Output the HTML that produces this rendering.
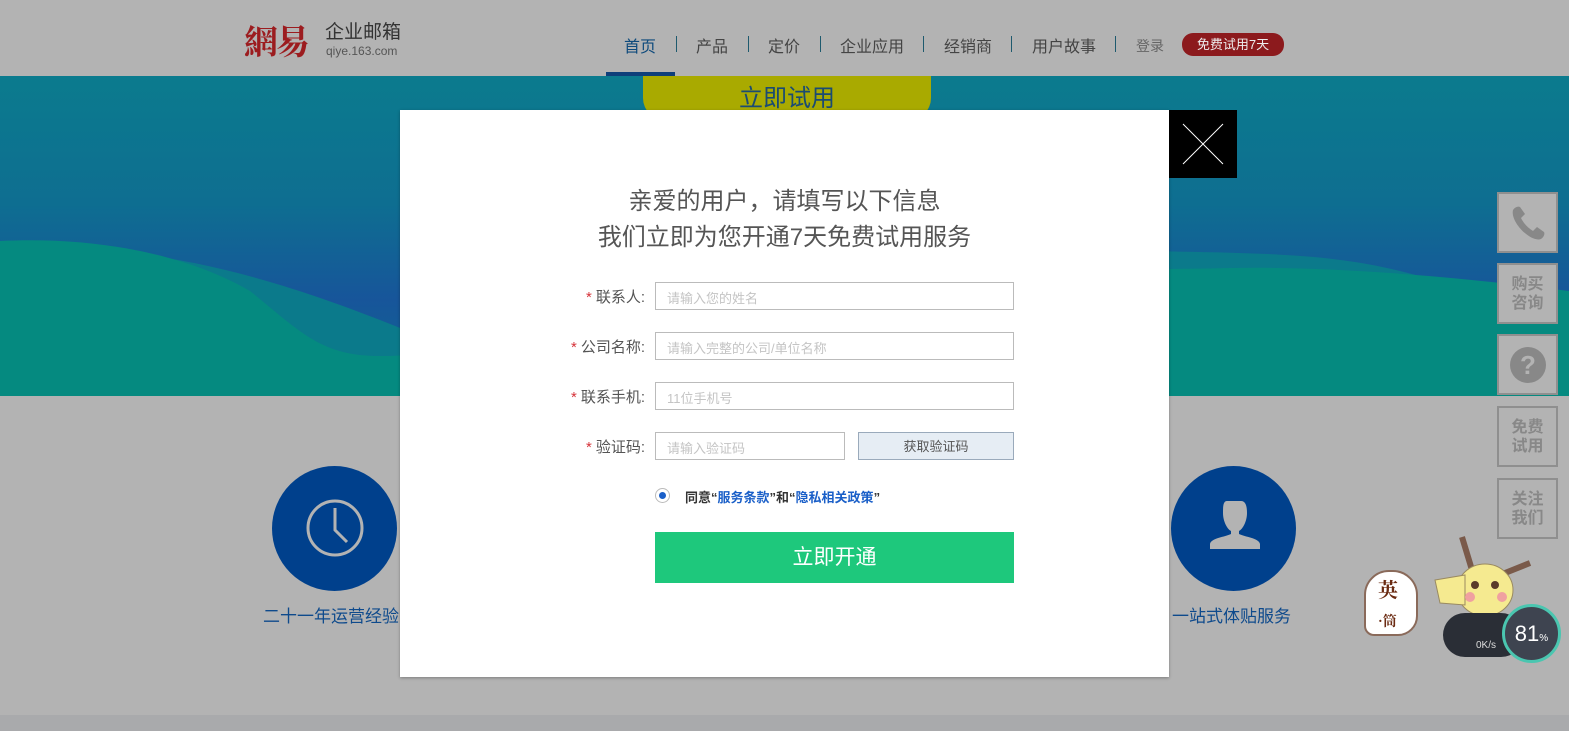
<!DOCTYPE html>
<html><head><meta charset="utf-8"><style>
*{margin:0;padding:0;box-sizing:border-box}
body{width:1569px;height:731px;overflow:hidden;background:#b3b3b3;position:relative;font-family:"Liberation Sans","Noto Sans CJK SC",sans-serif}
.abs{position:absolute}
.nav a{position:absolute;top:33px;font-size:16px;color:#444;white-space:nowrap}
.sep{position:absolute;top:36px;width:1px;height:16px;background:#1e5a6e}
.side{position:absolute;left:1497px;width:61px;height:61px;border:2px solid #8f8f8f;background:#b3b3b3;color:#888;font-size:16px;font-weight:bold;text-align:center;line-height:19px;display:flex;align-items:center;justify-content:center}
.lbl{position:absolute;font-size:15px;color:#555;text-align:right;width:110px;left:535px}
.lbl b{color:#d6333a;font-weight:normal;margin-right:4px}
.inp{position:absolute;left:655px;width:359px;height:28px;border:1px solid #bbb;font-size:13px;color:#c4c4c4;padding:5px 0 0 11px;background:#fff}
</style></head><body>
<div class="abs" style="left:244px;top:20px;font-family:'Noto Serif CJK SC',serif;font-size:34px;color:#9c1c1f;font-weight:bold;line-height:40px;letter-spacing:-2px">網易</div>
<div class="abs" style="left:325px;top:22px;font-size:19px;color:#333;line-height:22px">企业邮箱</div>
<div class="abs" style="left:326px;top:44px;font-size:12px;color:#555">qiye.163.com</div>
<div class="nav">
<a style="left:624px;color:#0e4a7c">首页</a><div class="sep" style="left:676px"></div>
<a style="left:696px">产品</a><div class="sep" style="left:748px"></div>
<a style="left:768px">定价</a><div class="sep" style="left:820px"></div>
<a style="left:840px">企业应用</a><div class="sep" style="left:923px"></div>
<a style="left:944px">经销商</a><div class="sep" style="left:1011px"></div>
<a style="left:1032px">用户故事</a><div class="sep" style="left:1115px"></div>
<a style="left:1136px;font-size:14px;top:36px;color:#666">登录</a>
</div>
<div class="abs" style="left:1182px;top:33px;width:102px;height:23px;border-radius:11px;background:#8c1a1d;color:#eee;font-size:13px;text-align:center;line-height:23px">免费试用7天</div>
<div class="abs" style="left:0;top:76px;width:1569px;height:320px;overflow:hidden;background:linear-gradient(#0b7b8e 0%,#0e6e91 40%,#17559a 70%,#0e6a90 100%)">
<svg width="1569" height="320" style="position:absolute;left:0;top:0">
<path d="M0 170 C150 170 250 190 420 260 C600 230 800 160 1000 170 C1200 180 1300 170 1400 195 C1480 215 1569 240 1569 240 L1569 320 L0 320Z" fill="#0b7a8b"/>
<path d="M0 165 C100 160 190 180 250 215 C300 255 320 280 380 280 C500 280 600 220 800 200 C1000 190 1100 195 1230 192 C1330 190 1450 200 1569 215 L1569 320 L0 320Z" fill="#058a80"/>
</svg>
<div class="abs" style="left:643px;top:0;width:288px;height:44px;border-radius:0 0 22px 22px;background:#a9aa00;color:#1a4b73;font-size:24px;text-align:center;line-height:46px">立即试用</div>
</div>
<div class="abs" style="left:606px;top:72px;width:69px;height:4px;background:#0e3f7a"></div>
<div class="abs" style="left:0;top:715px;width:1569px;height:16px;background:#a9aaac"></div>
<div class="abs" style="left:272px;top:466px;width:125px;height:125px;border-radius:50%;background:#00408c"></div>
<svg class="abs" style="left:305px;top:499px" width="60" height="60"><circle cx="30" cy="29" r="27" stroke="#b3b3b3" stroke-width="3" fill="none"/><path d="M30 9V31L42 43" stroke="#b3b3b3" stroke-width="3" fill="none"/></svg>
<div class="abs" style="left:263px;top:602px;font-size:17px;color:#0e4a8c">二十一年运营经验</div>
<div class="abs" style="left:1171px;top:466px;width:125px;height:125px;border-radius:50%;background:#00408c"></div>
<svg class="abs" style="left:1207px;top:498px" width="56" height="54"><path d="M20 3h14c5 0 6 6 6 12 0 8-4 16-8 18v3c6 3 20 4 21 10v5H3v-5c1-6 15-7 21-10v-3c-4-2-8-10-8-18 0-6 0-12 4-12z" fill="#b3b3b3"/></svg>
<div class="abs" style="left:1172px;top:602px;font-size:17px;color:#0e4a8c">一站式体贴服务</div>
<div class="side" style="top:192px"><svg width="38" height="38" viewBox="0 0 38 38"><path d="M4 6c2-3 5-4 7-3l5 7-4 4c3 6 7 10 12 13l4-4 7 5c1 2 0 5-3 7-10 4-31-17-28-29z" fill="#888"/></svg></div>
<div class="side" style="top:263px">购买<br>咨询</div>
<div class="side" style="top:334px"><svg width="38" height="38"><circle cx="19" cy="19" r="18" fill="#888"/><text x="19" y="28" text-anchor="middle" font-size="26" font-weight="bold" fill="#b3b3b3" font-family="Liberation Sans">?</text></svg></div>
<div class="side" style="top:406px">免费<br>试用</div>
<div class="side" style="top:478px">关注<br>我们</div>
<div class="abs" style="left:1364px;top:570px;width:54px;height:66px;border-radius:25px 25px 20px 10px;background:#fff;border:2px solid #8a6a5a;color:#6b2b12;font-family:'Noto Serif CJK SC',serif;font-weight:bold;font-size:20px;padding:2px 0 0 12px">英<br><span style="font-size:14px">·筒</span></div>
<svg class="abs" style="left:1430px;top:535px" width="110" height="100"><path d="M32 2L42 35M100 28L75 38" stroke="#7a5a4a" stroke-width="6"/><ellipse cx="55" cy="55" rx="28" ry="26" fill="#f5ea90" stroke="#9a8a60"/><path d="M5 45L35 40 35 70 10 68Z" fill="#f5ea90" stroke="#9a8a60"/><circle cx="45" cy="50" r="4" fill="#5a3a2a"/><circle cx="65" cy="50" r="4" fill="#5a3a2a"/><circle cx="40" cy="62" r="5" fill="#f0a0a0"/><circle cx="72" cy="62" r="5" fill="#f0a0a0"/></svg>
<div class="abs" style="left:1443px;top:613px;width:80px;height:44px;border-radius:22px;background:#2a2e36"></div>
<div class="abs" style="left:1476px;top:640px;font-size:10px;color:#ddd">0K/s</div>
<div class="abs" style="left:1502px;top:604px;width:59px;height:59px;border-radius:50%;background:#3e4450;border:3px solid #4ac6b0;color:#fff;font-size:22px;text-align:center;line-height:53px">81<span style="font-size:10px">%</span></div>
<div class="abs" style="left:400px;top:110px;width:769px;height:567px;background:#fff;box-shadow:0 1px 3px rgba(0,0,0,.3)"></div>
<div class="abs" style="left:1169px;top:110px;width:68px;height:68px;background:#000"><svg width="68" height="68"><path d="M14 14L54 54M54 14L14 54" stroke="#fff" stroke-width="1"/></svg></div>
<div class="abs" style="left:400px;top:184px;width:769px;text-align:center;font-size:24px;color:#555;line-height:36px">亲爱的用户，请填写以下信息<br>我们立即为您开通7天免费试用服务</div>
<div class="lbl" style="top:286px"><b>*</b>联系人:</div>
<div class="inp" style="top:282px">请输入您的姓名</div>
<div class="lbl" style="top:336px"><b>*</b>公司名称:</div>
<div class="inp" style="top:332px">请输入完整的公司/单位名称</div>
<div class="lbl" style="top:386px"><b>*</b>联系手机:</div>
<div class="inp" style="top:382px">11位手机号</div>
<div class="lbl" style="top:436px"><b>*</b>验证码:</div>
<div class="inp" style="top:432px;width:190px">请输入验证码</div>
<div class="abs" style="left:858px;top:432px;width:156px;height:28px;border:1px solid #9aaabb;background:#e6edf4;font-size:13px;color:#555;text-align:center;line-height:27px">获取验证码</div>
<div class="abs" style="left:655px;top:488px;width:15px;height:15px;border-radius:50%;border:1px solid #bbb"><div style="margin:3px;width:7px;height:7px;border-radius:50%;background:#1a5fc8"></div></div>
<div class="abs" style="left:685px;top:487px;font-size:13px;font-weight:bold;color:#333">同意“<span style="color:#1a5fc8">服务条款</span>”和“<span style="color:#1a5fc8">隐私相关政策</span>”</div>
<div class="abs" style="left:655px;top:532px;width:359px;height:51px;background:#1ec87c;color:#fff;font-size:21px;text-align:center;line-height:51px">立即开通</div>
</body></html>
